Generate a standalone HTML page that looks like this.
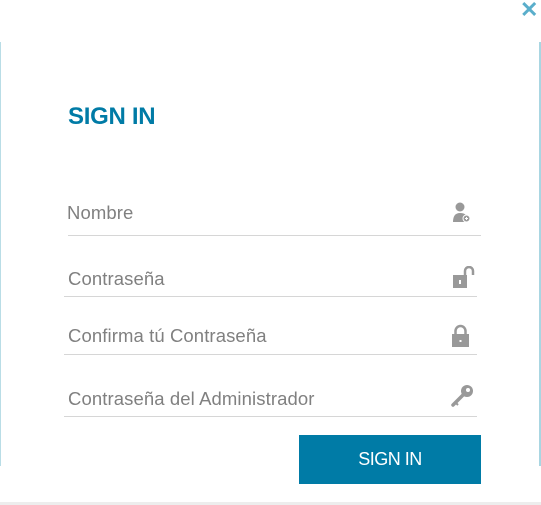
<!DOCTYPE html>
<html><head><meta charset="utf-8"><style>
body{margin:0;width:541px;height:505px;background:#fff;position:relative;overflow:hidden;font-family:"Liberation Sans",sans-serif}
.bl{position:absolute;left:0;top:42px;width:1px;height:424px;background:#b9dde6}
.br{position:absolute;left:539px;top:42px;width:2px;height:424px;background:#a9d6e2}
.bb{position:absolute;left:0;top:502px;width:541px;height:3px;background:#ededed}
.x{position:absolute;left:520px;top:-3px;color:#5aaecb;font-size:22px;font-weight:bold}
h1{position:absolute;left:68px;top:103px;margin:0;font-size:24px;font-weight:bold;color:#007ba6;letter-spacing:-0.3px}
.t{position:absolute;color:#808080;font-size:18.5px;letter-spacing:0.1px}
.l{position:absolute;height:1px;background:#d6d6d6}
.ic{position:absolute}
.btn{position:absolute;left:299px;top:435px;width:182px;height:49px;background:#007ba6;color:#fff;font-size:18px;text-align:center;line-height:49px;letter-spacing:-0.5px}
</style></head><body>
<div class="bl"></div><div class="br"></div><div class="bb"></div>
<div class="x">✕</div>
<h1>SIGN IN</h1>
<div class="t" style="left:67px;top:202px">Nombre</div>
<div class="l" style="left:68px;top:235px;width:413px"></div>
<div class="t" style="left:68px;top:268px">Contraseña</div>
<div class="l" style="left:64px;top:296px;width:413px"></div>
<div class="t" style="left:68px;top:325px">Confirma tú Contraseña</div>
<div class="l" style="left:64px;top:354px;width:413px"></div>
<div class="t" style="left:68px;top:388px">Contraseña del Administrador</div>
<div class="l" style="left:64px;top:416px;width:413px"></div>
<svg class="ic" style="left:452px;top:202px" width="20" height="22" viewBox="0 0 20 22"><circle cx="8" cy="5" r="4.5" fill="#999"/><path d="M1 20 Q1 11 8 11 Q12 11 14 13 L14 20Z" fill="#999"/><circle cx="14.5" cy="16.5" r="3.5" fill="#999" stroke="#fff" stroke-width="1"/><path d="M13 16.5h3M14.5 15v3" stroke="#fff" stroke-width="1"/></svg>
<svg class="ic" style="left:452px;top:266px" width="26" height="24" viewBox="0 0 26 24"><rect x="1" y="9" width="14" height="13" fill="#999"/><path d="M13 9 V5 a4 4 0 0 1 8 0 V9" fill="none" stroke="#999" stroke-width="2.5"/><rect x="7" y="14" width="2" height="4" fill="#fff"/></svg>
<svg class="ic" style="left:451px;top:324px" width="20" height="24" viewBox="0 0 20 24"><rect x="1" y="10" width="17" height="13" fill="#999"/><path d="M4.5 10 V7 a5 5 0 0 1 10 0 V10" fill="none" stroke="#999" stroke-width="2.5"/><rect x="8.5" y="16" width="2" height="2" fill="#fff"/></svg>
<svg class="ic" style="left:450px;top:383px" width="26" height="26" viewBox="0 0 26 26"><circle cx="17" cy="8" r="6" fill="#999"/><circle cx="18" cy="7" r="2" fill="#fff"/><path d="M13 12 L3 22" stroke="#999" stroke-width="3.5" stroke-linecap="round"/><path d="M5 19 l3 3" stroke="#999" stroke-width="2"/></svg>
<div class="btn">SIGN IN</div>
</body></html>
